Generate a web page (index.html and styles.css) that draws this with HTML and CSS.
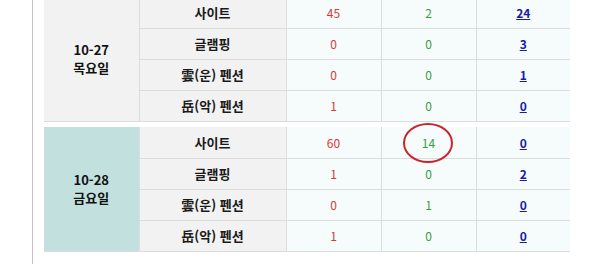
FILE: index.html
```html
<!DOCTYPE html>
<html lang="ko">
<head>
<meta charset="utf-8">
<link rel="stylesheet" href="styles.css">
</head>
<body>
<div class="box">
  <table class="day">
    <colgroup><col class="c-date"><col class="c-cat"><col class="c-num"><col class="c-num"><col class="c-num5"></colgroup>
    <tr>
      <td class="date" rowspan="4">10-27<br>목요일</td>
      <td class="cat">사이트</td>
      <td class="val red">45</td>
      <td class="val green">2</td>
      <td class="val"><a href="#">24</a></td>
    </tr>
    <tr>
      <td class="cat">글램핑</td>
      <td class="val red">0</td>
      <td class="val green">0</td>
      <td class="val"><a href="#">3</a></td>
    </tr>
    <tr>
      <td class="cat">雲(운) 펜션</td>
      <td class="val red">0</td>
      <td class="val green">0</td>
      <td class="val"><a href="#">1</a></td>
    </tr>
    <tr>
      <td class="cat">岳(악) 펜션</td>
      <td class="val red">1</td>
      <td class="val green">0</td>
      <td class="val"><a href="#">0</a></td>
    </tr>
  </table>
  <table class="day">
    <colgroup><col class="c-date"><col class="c-cat"><col class="c-num"><col class="c-num"><col class="c-num5"></colgroup>
    <tr>
      <td class="date today" rowspan="4">10-28<br>금요일</td>
      <td class="cat">사이트</td>
      <td class="val red">60</td>
      <td class="val green"><span class="circled">14</span></td>
      <td class="val"><a href="#">0</a></td>
    </tr>
    <tr>
      <td class="cat">글램핑</td>
      <td class="val red">1</td>
      <td class="val green">0</td>
      <td class="val"><a href="#">2</a></td>
    </tr>
    <tr>
      <td class="cat">雲(운) 펜션</td>
      <td class="val red">0</td>
      <td class="val green">1</td>
      <td class="val"><a href="#">0</a></td>
    </tr>
    <tr>
      <td class="cat">岳(악) 펜션</td>
      <td class="val red">1</td>
      <td class="val green">0</td>
      <td class="val"><a href="#">0</a></td>
    </tr>
  </table>
</div>
</body>
</html>
```
FILE: styles.css
```css
html, body {
  margin: 0;
  padding: 0;
  background: #ffffff;
}
body {
  font-family: "Noto Sans CJK KR", "Noto Sans", sans-serif;
  overflow: hidden;
}
.box {
  margin: -3px 0 0 32px;
  width: 548px;
  height: 280px;
  border-left: 1px solid #c4c4c4;
  border-right: 1px solid #c4c4c4;
  padding: 0 11px;
}
.day {
  width: 526px;
  table-layout: fixed;
  border-collapse: collapse;
  margin-bottom: 5px;
}
.c-date { width: 95px; }
.c-cat { width: 147px; }
.c-num { width: 95px; }
.c-num5 { width: 94px; }
.day td {
  height: 30px;
  padding: 0;
  text-align: center;
  vertical-align: middle;
  border-bottom: 1px solid #dcdcdc;
  border-right: 1px solid #dcdcdc;
  line-height: 16px;
}
.day tr:first-child td {
  height: 31px;
}
.day td:last-child {
  border-right: none;
}
.date {
  background: #f2f2f2;
  font-weight: bold;
  font-size: 13px;
  line-height: 18px !important;
  color: #111;
}
.date.today {
  background: #c2e1de;
}
.cat {
  background: #f2f2f2;
  font-weight: bold;
  font-size: 13px;
  color: #1a1a1a;
}
.val {
  background: #f6fbfb;
  font-size: 12px;
}
.red { color: #d63a3a; }
.green { color: #3c9d3c; }
.val a {
  color: #1a1aa6;
  font-weight: bold;
  text-decoration: underline;
}
.circled {
  position: relative;
  display: inline-block;
}
.circled::after {
  content: "";
  position: absolute;
  left: 50%;
  top: 50%;
  width: 46px;
  height: 36px;
  margin-left: -25px;
  margin-top: -20px;
  border: 2px solid #c9262c;
  border-radius: 50%;
}
```
